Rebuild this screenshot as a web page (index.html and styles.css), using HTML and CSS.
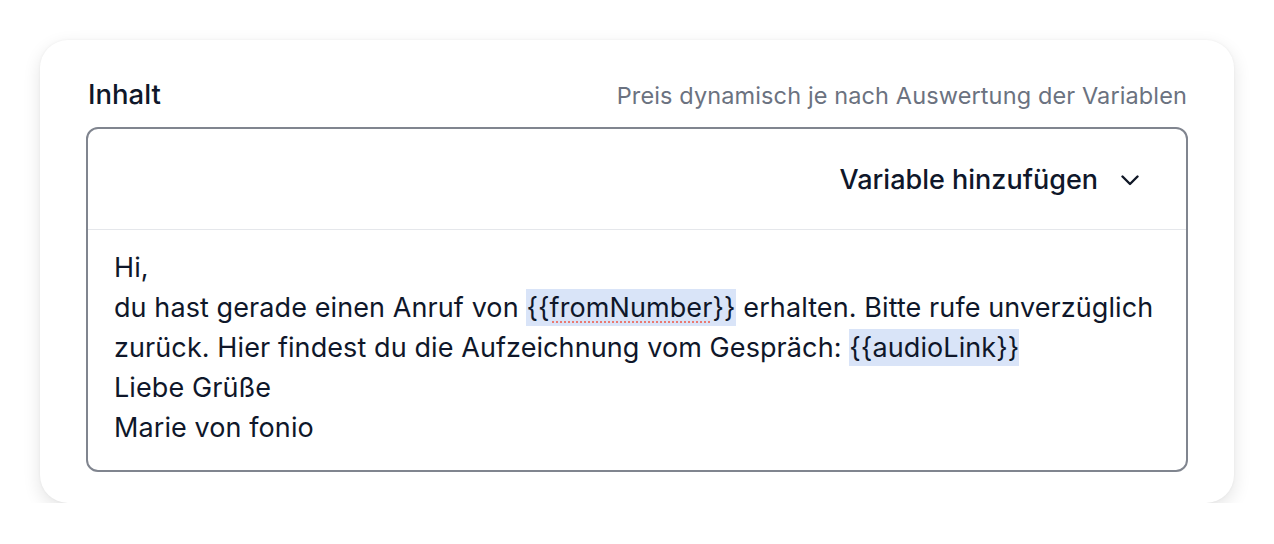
FILE: index.html
```html
<!DOCTYPE html>
<html lang="de">
<head>
<meta charset="utf-8">
<link rel="stylesheet" href="styles.css">
</head>
<body>
<div class="card">
  <div class="head">
    <span class="label">Inhalt</span>
    <span class="hint">Preis dynamisch je nach Auswertung der Variablen</span>
  </div>
  <div class="editor">
    <div class="toolbar">
      <button class="var-btn">Variable hinzufügen
        <svg class="chev" width="18" height="11" viewBox="0 0 18 11" fill="none"><path d="M1.5 1.5L9 9L16.5 1.5" stroke="#111827" stroke-width="2.4" stroke-linecap="round" stroke-linejoin="round"/></svg>
      </button>
    </div>
    <div class="content">
      <div>Hi,</div>
      <div>du hast gerade einen Anruf von <span class="var">{{<span class="spell">fromNumber</span>}}</span> erhalten. Bitte rufe unverzüglich zurück. Hier findest du die Aufzeichnung vom Gespräch: <span class="var">{{audioLink}}</span></div>
      <div>Liebe Grüße</div>
      <div>Marie von fonio</div>
    </div>
  </div>
</div>
</body>
</html>
```

FILE: styles.css
```css
html, body {
  margin: 0;
  background: #ffffff;
  font-family: "Inter", "Noto Sans", sans-serif;
  color: #0f172a;
}
.card {
  margin: 40px 0 0 40px;
  width: 1194px;
  height: 463px;
  box-sizing: border-box;
  padding: 38px 46px 31px 46px;
  border-radius: 28px;
  background: #fff;
  box-shadow: 0 6px 18px rgba(0,0,0,0.11), 0 0 3px rgba(0,0,0,0.05);
  display: flex;
  flex-direction: column;
}
.head {
  display: flex;
  justify-content: space-between;
  align-items: baseline;
  height: 32px;
  margin-bottom: 17px;
}
.label {
  font-size: 27.5px;
  line-height: 32px;
  font-weight: 500;
  padding-left: 2px;
}
.hint {
  font-size: 23.5px;
  letter-spacing: 0.12px;
  color: #6b7280;
  padding-right: 1px;
}
.editor {
  flex: 1;
  border: 2px solid #80858f;
  border-radius: 12px;
  display: flex;
  flex-direction: column;
}
.toolbar {
  height: 100px;
  border-bottom: 1px solid #e5e7eb;
  display: flex;
  align-items: center;
  justify-content: flex-end;
  padding-right: 47px;
}
.var-btn {
  font-family: inherit;
  font-size: 27px;
  font-weight: 500;
  color: #0f172a;
  background: none;
  border: none;
  padding: 0;
  display: flex;
  align-items: center;
  gap: 23px;
}
.chev {
  margin-top: 2px;
}
.content {
  padding: 18px 28px 17px 26px;
  font-size: 27px;
  line-height: 40px;
  letter-spacing: 0.09px;
}
.var {
  background: #d9e4f8;
  padding: 2px 0;
}
.spell {
  background-image: radial-gradient(circle, #ea7a72 1.1px, transparent 1.5px);
  background-size: 4px 4px;
  background-repeat: repeat-x;
  background-position: 1px 100%;
}
```
